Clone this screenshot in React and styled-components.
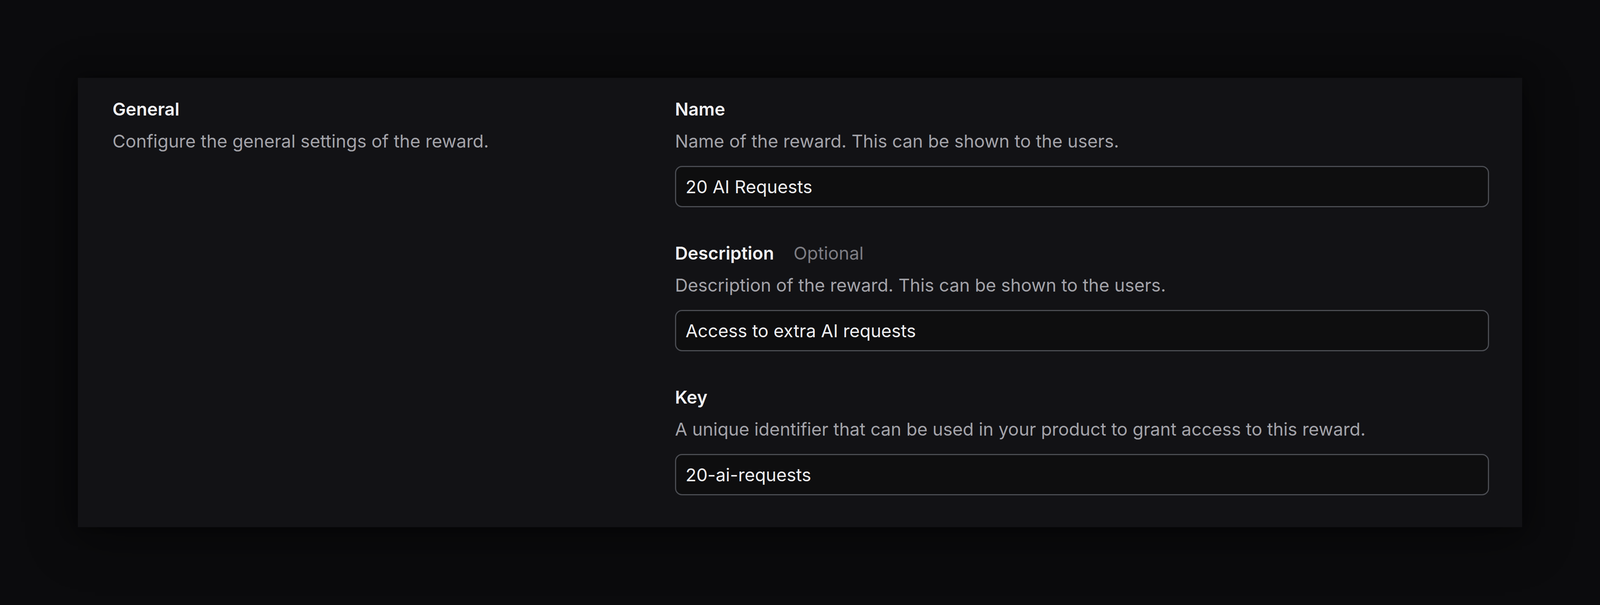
import React from "react";
import styled, { createGlobalStyle } from "styled-components";

const GlobalStyle = createGlobalStyle`
  html, body {
    margin: 0;
    padding: 0;
    background: #0b0b0d;
  }
  body {
    font-family: Inter, "Noto Sans", "Liberation Sans", sans-serif;
    -webkit-font-smoothing: antialiased;
  }
`;

const fields = [
  {
    key: "name",
    label: "Name",
    hint: "Name of the reward. This can be shown to the users.",
    value: "20 AI Requests",
  },
  {
    key: "description",
    label: "Description",
    optional: true,
    hint: "Description of the reward. This can be shown to the users.",
    value: "Access to extra AI requests",
  },
  {
    key: "key",
    label: "Key",
    hint: "A unique identifier that can be used in your product to grant access to this reward.",
    value: "20-ai-requests",
  },
];

const App = () => {
  return (
    <Page>
      <GlobalStyle />
      <Card>
        <Intro>
          <Title>General</Title>
          <Hint>Configure the general settings of the reward.</Hint>
        </Intro>
        <Fields>
          {fields.map((field) => (
            <Field key={field.key}>
              <LabelRow>
                <Label htmlFor={field.key}>{field.label}</Label>
                {field.optional && <Optional>Optional</Optional>}
              </LabelRow>
              <Hint>{field.hint}</Hint>
              <Input id={field.key} value={field.value} readOnly />
            </Field>
          ))}
        </Fields>
      </Card>
    </Page>
  );
};

export default App;

const Page = styled.div`
  min-height: 1550px;
  padding: 200px 200px 0;
  box-sizing: border-box;
  background: #0b0b0d;
`;

// left column holds the section intro, right column the form fields
const Card = styled.section`
  display: grid;
  grid-template-columns: 40.86% 1fr;
  box-sizing: border-box;
  padding: 50px 84px 81px 88px;
  background: #121215;
  box-shadow: 0 0 0 1px #0e0e10, 0 0 40px rgba(0, 0, 0, 0.55),
    0 30px 120px rgba(0, 0, 0, 0.35);
`;

const Intro = styled.div`
  display: flex;
  flex-direction: column;
  gap: 22px;
`;

const Title = styled.h2`
  margin: 0;
  font-size: 45.5px;
  line-height: 60px;
  font-weight: 600;
  color: #f1f1f3;
`;

const Fields = styled.div`
  display: flex;
  flex-direction: column;
  gap: 88px;
`;

const Field = styled.div`
  display: flex;
  flex-direction: column;
`;

const LabelRow = styled.div`
  display: flex;
  align-items: baseline;
  gap: 50px;
  margin-bottom: 22px;
`;

const Label = styled.label`
  font-size: 45.5px;
  line-height: 60px;
  font-weight: 600;
  color: #f1f1f3;
`;

const Optional = styled.span`
  font-size: 45.5px;
  line-height: 60px;
  font-weight: 400;
  color: #7d7d83;
`;

const Hint = styled.p`
  margin: 0;
  font-size: 45.5px;
  line-height: 60px;
  font-weight: 400;
  color: #a3a3a9;
`;

const Input = styled.input`
  display: block;
  margin-top: 33px;
  width: 100%;
  height: 106px;
  box-sizing: border-box;
  padding: 0 24px;
  border: 3px solid #4a4c52;
  border-radius: 18px;
  background: #0e0e0f;
  color: #efeff1;
  font-family: inherit;
  font-size: 45.5px;
  outline: none;
`;
